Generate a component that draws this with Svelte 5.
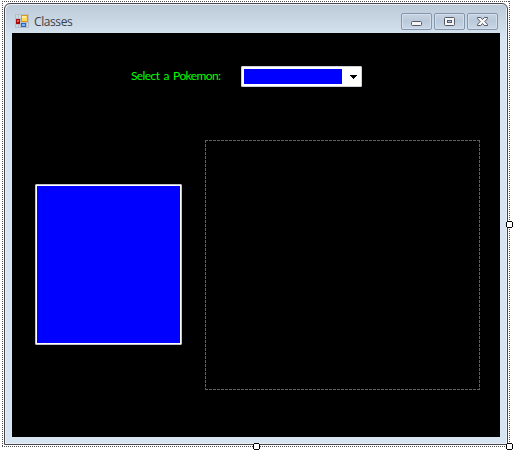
<script>
  const handles = [
    { x: 506, y: 221 },
    { x: 253, y: 443 },
    { x: 506, y: 443 }
  ];
</script>

<main class="designer">
  <section class="window">
    <header class="titlebar">
      <svg class="app-icon" width="14" height="14" viewBox="0 0 14 14" shape-rendering="crispEdges">
        <rect width="14" height="14" fill="#b5bfc9" />
        <path d="M1 1h2v3H1zM4 1h2v3H4zM1 11h2v2H1zM4 11h1v2H4zM12 9h1v4h-1z" fill="#d0d8e0" />
        <rect x="1" y="5" width="4" height="5" fill="#a80d0d" />
        <rect x="2" y="6" width="2" height="2" fill="#ef5850" />
        <rect x="6" y="1" width="7" height="7" fill="#d99a15" />
        <rect x="7" y="2" width="5" height="5" fill="#ffd75c" />
        <rect x="7" y="2" width="4" height="2" fill="#ffeda5" />
        <rect x="6" y="9" width="5" height="4" fill="#2864ca" />
        <rect x="7" y="10" width="3" height="2" fill="#80b3ff" />
      </svg>
      <span class="title">Classes</span>
      <div class="controls">
        <button class="control" aria-label="Minimize">
          <svg width="29" height="15" viewBox="0 0 29 15">
            <rect x="9.5" y="7.5" width="10" height="4" rx="1" fill="#f5f5f5" stroke="#555865" />
          </svg>
        </button>
        <button class="control" aria-label="Maximize">
          <svg width="29" height="15" viewBox="0 0 29 15">
            <rect x="9.5" y="3.5" width="10" height="8" rx="1" fill="#f5f5f5" stroke="#555865" />
            <rect x="12.5" y="6.5" width="4" height="2" fill="#b9c8da" stroke="#555865" />
          </svg>
        </button>
        <button class="control" aria-label="Close">
          <svg width="29" height="15" viewBox="0 0 29 15">
            <path d="M9.5 3.5h3.2l1.8 2 1.8-2h3.2v1.2l-2.7 2.8 2.7 2.8v1.2h-3.2l-1.8-2-1.8 2H9.5v-1.2l2.7-2.8-2.7-2.8z" fill="#f5f5f5" stroke="#555865" />
          </svg>
        </button>
      </div>
    </header>

    <div class="client">
      <div class="picker">
        <span class="label">Select a Pokemon:</span>
        <div class="combo">
          <div class="field"></div>
          <svg width="17" height="15" viewBox="0 0 17 15" shape-rendering="crispEdges">
            <path d="M8 6h7v1H8zM9 7h5v1H9zM10 8h3v1h-3zM11 9h1v1h-1z" fill="#000" />
          </svg>
        </div>
      </div>
      <div class="content">
        <div class="list"></div>
        <svg class="picture" width="275" height="250" viewBox="0 0 275 250" shape-rendering="crispEdges">
          <path d="M0 .5h275M0 249.5h275M.5 0v250M274.5 0v250" fill="none" stroke="#606060" stroke-dasharray="3 1" />
        </svg>
      </div>
    </div>
  </section>

  <svg class="selection" width="519" height="453" viewBox="0 0 519 453" shape-rendering="crispEdges">
    <path d="M2 1.5h508M2 446.5h508M2.5 1v446M509.5 1v446" fill="none" stroke="#505050" stroke-dasharray="1 1" />
    {#each handles as h}
      <rect x={h.x + 1} y={h.y + 1} width="5" height="5" fill="#fff" />
      <path d="M{h.x + 1} {h.y}h5v1h-5zM{h.x + 1} {h.y + 6}h5v1h-5zM{h.x} {h.y + 1}h1v5h-1zM{h.x + 6} {h.y + 1}h1v5h-1z" fill="#000" />
    {/each}
  </svg>
</main>

<style>
  :global(body) {
    background: #fff;
  }
  .designer {
    position: relative;
    box-sizing: border-box;
    width: 519px;
    height: 453px;
    padding: 3px 0 0 4px;
    overflow: hidden;
    background: #fff;
  }
  .window {
    box-sizing: border-box;
    width: 504px;
    height: 442px;
    padding: 0 7px 7px;
    border: 1px solid #484649;
    border-radius: 6px 6px 0 0;
    background: linear-gradient(#bccad8, #d7e4f2 34px);
    box-shadow: inset 1px 1px #e9f0f7, inset -1px -1px #e9f0f7;
  }
  .titlebar {
    display: flex;
    height: 29px;
    padding-left: 3px;
  }
  .app-icon {
    margin-top: 10px;
  }
  .title {
    margin: 9px 0 0 5px;
    font: 12px/18px "Open Sans", "Noto Sans", sans-serif;
    letter-spacing: -0.4px;
    color: #3b4046;
  }
  .controls {
    display: flex;
    gap: 2px;
    margin: 9px 2px 0 auto;
  }
  .control {
    box-sizing: border-box;
    width: 31px;
    height: 17px;
    padding: 0;
    border: 1px solid #8496ad;
    border-radius: 2px;
    background: linear-gradient(#c7d3e1, #bac9da 45%, #c9d7e6);
    box-shadow: inset 0 0 0 1px #d4dfeb;
  }
  .control svg {
    display: block;
  }
  .client {
    box-sizing: border-box;
    width: 488px;
    height: 404px;
    padding: 33px 0 0 23px;
    background: #000;
  }
  .picker {
    display: flex;
    height: 21px;
    padding-left: 96px;
  }
  .label {
    width: 110px;
    font: 12px/19px Lato, "Open Sans", sans-serif;
    letter-spacing: -0.6px;
    word-spacing: 1.7px;
    white-space: nowrap;
    color: #0f0;
  }
  .combo {
    display: flex;
    box-sizing: border-box;
    width: 121px;
    height: 21px;
    padding: 2px;
    border: 1px solid #d0d0d8;
    border-radius: 1px;
    background: #fff;
  }
  .field {
    flex: none;
    width: 98px;
    height: 15px;
    background: #00f;
  }
  .content {
    display: flex;
    gap: 23px;
    margin-top: 53px;
  }
  .list {
    box-sizing: border-box;
    width: 147px;
    height: 161px;
    margin-top: 44px;
    border: 1px solid #c2c5ca;
    border-radius: 1px;
    background: #00f;
    box-shadow: inset 0 0 0 1px #fff;
  }
  .selection {
    position: absolute;
    inset: 0;
    pointer-events: none;
  }
</style>
